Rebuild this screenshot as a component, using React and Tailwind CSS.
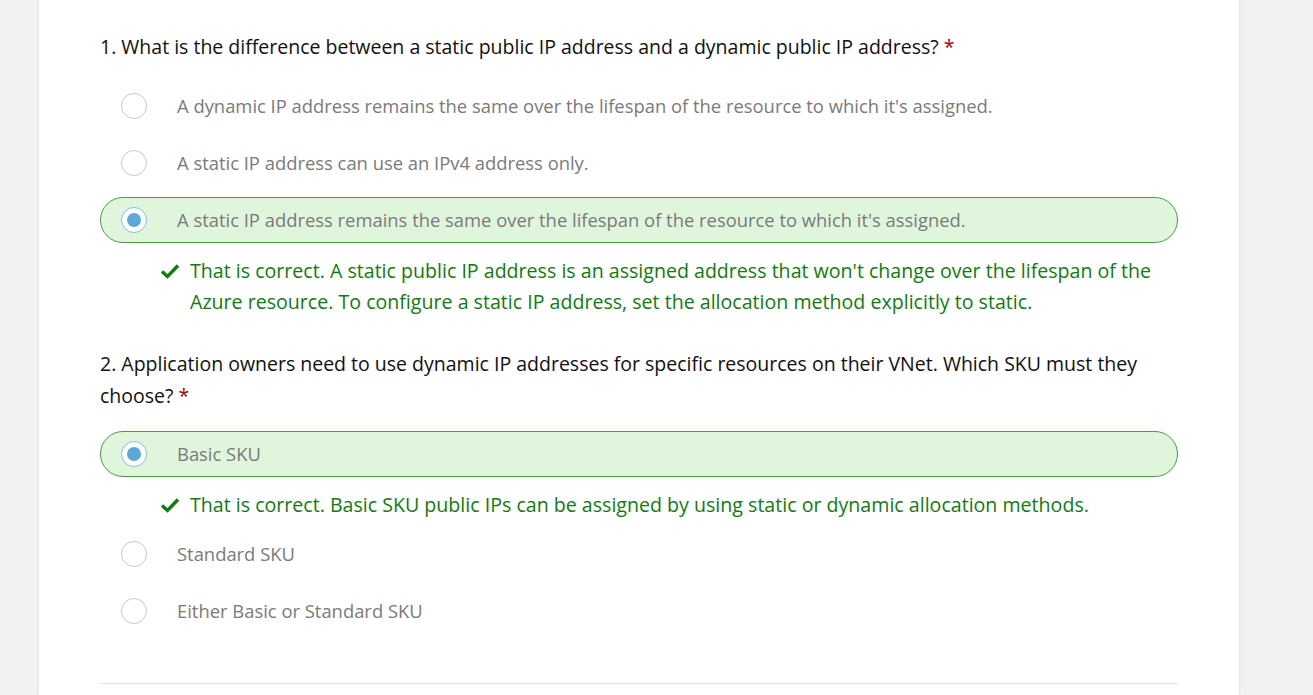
import React from "react";

const questions = [
  {
    title: "1. What is the difference between a static public IP address and a dynamic public IP address?",
    options: [
      { text: "A dynamic IP address remains the same over the lifespan of the resource to which it's assigned." },
      { text: "A static IP address can use an IPv4 address only." },
      {
        text: "A static IP address remains the same over the lifespan of the resource to which it's assigned.",
        selected: true,
        feedback:
          "That is correct. A static public IP address is an assigned address that won't change over the lifespan of the Azure resource. To configure a static IP address, set the allocation method explicitly to static.",
      },
    ],
  },
  {
    title: "2. Application owners need to use dynamic IP addresses for specific resources on their VNet. Which SKU must they choose?",
    options: [
      {
        text: "Basic SKU",
        selected: true,
        feedback: "That is correct. Basic SKU public IPs can be assigned by using static or dynamic allocation methods.",
      },
      { text: "Standard SKU" },
      { text: "Either Basic or Standard SKU" },
    ],
  },
];

function Radio({ checked }) {
  if (checked) {
    return (
      <span className="flex h-[26px] w-[26px] shrink-0 items-center justify-center rounded-full border border-[#86bfe0] bg-white">
        <span className="h-[14px] w-[14px] rounded-full bg-[#5ba8d9]" />
      </span>
    );
  }
  return <span className="h-[26px] w-[26px] shrink-0 rounded-full border border-[#c8c8c8] bg-white" />;
}

function Check() {
  return (
    <svg width="20" height="16" viewBox="0 0 20 16" className="mt-[8px] shrink-0">
      <path d="M2 8.5 L7.5 13.5 L18 2.5" fill="none" stroke="#107c10" strokeWidth="3.4" />
    </svg>
  );
}

function Option({ opt }) {
  return (
    <div>
      <div
        className={
          "flex h-[46px] items-center rounded-full border pl-[20px] " +
          (opt.selected ? "border-[#4a9a4a] bg-[#dff6dd]" : "border-transparent")
        }
      >
        <Radio checked={opt.selected} />
        <span className="ml-[30px] text-[18.4px] text-[#7a7a7a]">{opt.text}</span>
      </div>
      {opt.feedback && (
        <div className="mt-[12px] flex pl-[60px] pr-[10px] text-[19.6px] leading-[31px] text-[#107c10]">
          <Check />
          <p className="ml-[10px]">{opt.feedback}</p>
        </div>
      )}
    </div>
  );
}

export default function App() {
  return (
    <div
      className="min-h-[695px] bg-[#f2f2f2]"
      style={{ fontFamily: "'Open Sans', 'Noto Sans', sans-serif" }}
    >
      <div className="ml-[39px] min-h-[695px] w-[1200px] bg-white px-[61px] pt-[31px] shadow-[0_0_3px_rgba(0,0,0,0.12)]">
        {questions.map((q, qi) => (
          <div key={qi} className={qi ? "mt-[31px]" : ""}>
            <h2 className="text-[19.5px] leading-[32px] text-[#111]">
              {q.title} <span className="text-[#a80000]">*</span>
            </h2>
            <div className={"flex flex-col gap-[11px] " + (qi ? "mt-[19px]" : "mt-[20px]")}>
              {q.options.map((o, oi) => (
                <Option key={oi} opt={o} />
              ))}
            </div>
          </div>
        ))}
        <div className="mt-[49px] h-px bg-[#e3e3e3]" />
      </div>
    </div>
  );
}
